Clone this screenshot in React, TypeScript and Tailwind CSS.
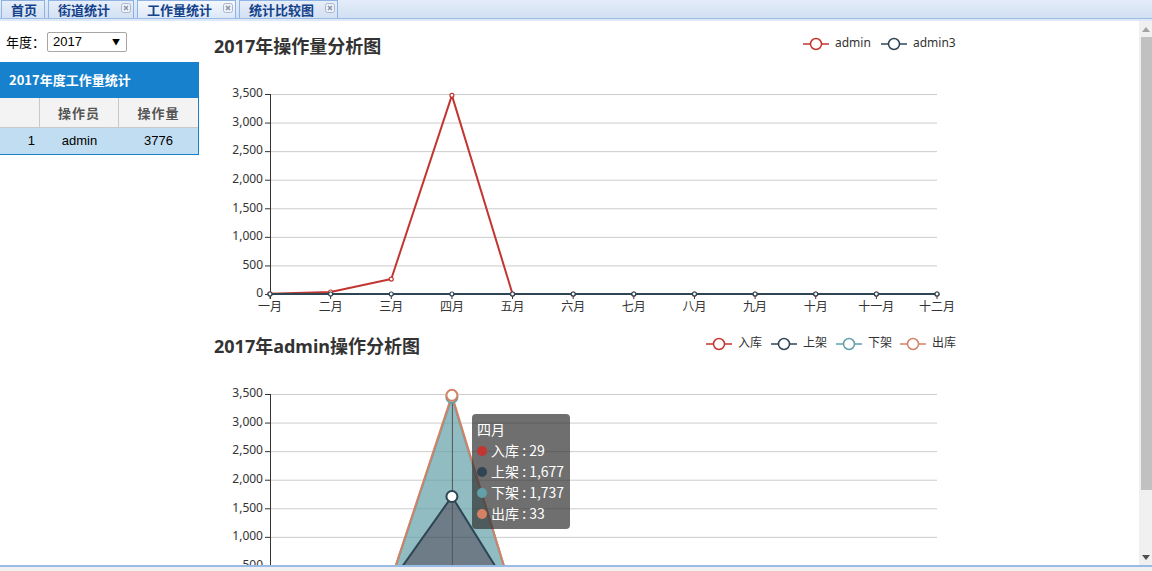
import React from 'react';

const months = ['一月', '二月', '三月', '四月', '五月', '六月', '七月', '八月', '九月', '十月', '十一月', '十二月'];
const ticks = [0, 500, 1000, 1500, 2000, 2500, 3000, 3500];

const X0 = 70;
const STEP = 667 / 11;
const Y0 = 268;
const xAt = (i: number) => X0 + i * STEP;
const yAt = (v: number) => Y0 - (v / 3500) * 200;
const fmt = (v: number) => v.toLocaleString('en-US');

const RED = '#c23531';
const DARK = '#2f4554';
const TEAL = '#61a0a8';
const ORANGE = '#d48265';

function CloseIcon() {
  return (
    <svg width="10" height="10" viewBox="0 0 10 10" className="self-start mt-[2px]">
      <rect x="0.5" y="0.5" width="9" height="9" rx="2" fill="#eef2f8" stroke="#aab7c9" />
      <path d="M3 3 L7 7 M7 3 L3 7" stroke="#8592a6" strokeWidth="1.4" />
    </svg>
  );
}

function Tab({ label, closable, active }: { label: string; closable?: boolean; active?: boolean }) {
  return (
    <div
      className={
        'h-[18px] flex items-center gap-[11px] border border-b-0 border-[#8db2e3] pl-[9px] ' +
        (closable ? 'pr-[2px] ' : 'pr-[7px] ') +
        (active ? 'bg-gradient-to-b from-[#f4f8fd] to-[#dce8f7]' : 'bg-gradient-to-b from-[#e6eef9] to-[#d3e1f3]')
      }
    >
      <span className="text-[13px] leading-none font-bold text-[#15428b]">{label}</span>
      {closable && <CloseIcon />}
    </div>
  );
}

function Axes() {
  return (
    <g>
      {ticks.map(t => (
        <g key={t}>
          {t > 0 && <line x1={X0} x2={737} y1={yAt(t) + 0.5} y2={yAt(t) + 0.5} stroke="#cccccc" />}
          <line x1={X0 - 5} x2={X0} y1={yAt(t) + 0.5} y2={yAt(t) + 0.5} stroke="#333" />
          <text x={X0 - 7} y={yAt(t)} textAnchor="end" dominantBaseline="middle" fontSize="12" fill="#333">
            {fmt(t)}
          </text>
        </g>
      ))}
      <line x1={X0 + 0.5} x2={X0 + 0.5} y1={yAt(3500)} y2={Y0 + 5} stroke="#333" />
      <line x1={X0} x2={737} y1={Y0 + 0.5} y2={Y0 + 0.5} stroke="#333" />
      {months.map((m, i) => (
        <g key={m}>
          <line x1={xAt(i)} x2={xAt(i)} y1={Y0} y2={Y0 + 5} stroke="#333" />
          <text x={xAt(i)} y={Y0 + 14} textAnchor="middle" dominantBaseline="middle" fontSize="12" fill="#333">
            {m}
          </text>
        </g>
      ))}
    </g>
  );
}

function LegendItem({ x, color, label }: { x: number; color: string; label: string }) {
  return (
    <g>
      <line x1={x} x2={x + 26} y1={18} y2={18} stroke={color} strokeWidth="1.5" />
      <circle cx={x + 13} cy={18} r="5.5" fill="#fff" stroke={color} strokeWidth="1.5" />
      <text x={x + 32} y={18} dominantBaseline="middle" fontSize="12" fill="#333">
        {label}
      </text>
    </g>
  );
}

const pts = (vals: number[]) => vals.map((v, i) => `${xAt(i)},${yAt(v)}`).join(' ');

function WorkloadChart() {
  const admin = [3, 35, 262, 3476, 0, 0, 0, 0, 0, 0, 0, 0];
  const admin3 = months.map(() => 0);
  return (
    <svg width="940" height="300" className="block shrink-0 font-['Noto_Sans','Noto_Sans_CJK_SC',sans-serif]">
      <text x="14" y="22" dominantBaseline="middle" fontSize="18" fontWeight="bold" fill="#333">
        2017年操作量分析图
      </text>
      <LegendItem x={603} color={RED} label="admin" />
      <LegendItem x={681} color={DARK} label="admin3" />
      <Axes />
      {[
        { vals: admin, color: RED },
        { vals: admin3, color: DARK },
      ].map(s => (
        <g key={s.color}>
          <polyline points={pts(s.vals)} fill="none" stroke={s.color} strokeWidth="2" strokeLinejoin="round" />
          {s.vals.map((v, i) => (
            <circle key={i} cx={xAt(i)} cy={yAt(v)} r="2" fill="#fff" stroke={s.color} strokeWidth="1.2" />
          ))}
        </g>
      ))}
    </svg>
  );
}

function DetailChart() {
  const series = [
    { name: '入库', color: RED, fill: 'rgba(194,53,49,0.7)', vals: [1, 10, 10, 29, 0, 0, 0, 0, 0, 0, 0, 0] },
    { name: '上架', color: DARK, fill: 'rgba(47,69,84,0.7)', vals: [1, 10, 200, 1677, 0, 0, 0, 0, 0, 0, 0, 0] },
    { name: '下架', color: TEAL, fill: 'rgba(97,160,168,0.7)', vals: [1, 10, 40, 1737, 0, 0, 0, 0, 0, 0, 0, 0] },
    { name: '出库', color: ORANGE, fill: 'rgba(212,130,101,0.7)', vals: [0, 5, 12, 33, 0, 0, 0, 0, 0, 0, 0, 0] },
  ];
  let prev = months.map(() => 0);
  const stacked = series.map(s => {
    const top = prev.map((p, i) => p + s.vals[i]);
    const bottom = prev;
    prev = top;
    return { ...s, top, bottom };
  });
  const hover = 3;

  return (
    <div className="relative shrink-0">
      <svg width="940" height="300" className="block font-['Noto_Sans','Noto_Sans_CJK_SC',sans-serif]">
        <text x="14" y="22" dominantBaseline="middle" fontSize="18" fontWeight="bold" fill="#333">
          2017年admin操作分析图
        </text>
        <LegendItem x={506} color={RED} label="入库" />
        <LegendItem x={571} color={DARK} label="上架" />
        <LegendItem x={636} color={TEAL} label="下架" />
        <LegendItem x={700} color={ORANGE} label="出库" />
        <Axes />
        {stacked.map(s => (
          <polygon
            key={s.name + 'a'}
            points={pts(s.top) + ' ' + s.bottom.map((v, i) => `${xAt(i)},${yAt(v)}`).reverse().join(' ')}
            fill={s.fill}
          />
        ))}
        {stacked.map(s => (
          <polyline key={s.name + 'l'} points={pts(s.top)} fill="none" stroke={s.color} strokeWidth="2" strokeLinejoin="round" />
        ))}
        <line x1={xAt(hover) + 0.5} x2={xAt(hover) + 0.5} y1={yAt(3500)} y2={Y0} stroke="#555" />
        {stacked.map(s => (
          <circle key={s.name + 'c'} cx={xAt(hover)} cy={yAt(s.top[hover])} r="5.5" fill="#fff" stroke={s.color} strokeWidth="2" />
        ))}
      </svg>
      <div className="absolute left-[272px] top-[88px] w-[98px] rounded-[4px] bg-[rgba(50,50,50,0.7)] px-[5px] py-[5px] text-[14px] leading-[21px] text-white">
        <div>四月</div>
        {series.map(s => (
          <div key={s.name} className="flex items-center whitespace-nowrap">
            <span className="mr-[4px] inline-block h-[10px] w-[10px] rounded-full" style={{ backgroundColor: s.color }} />
            {s.name} : {fmt(s.vals[hover])}
          </div>
        ))}
      </div>
    </div>
  );
}

function LeftPanel() {
  return (
    <div className="w-[200px] shrink-0 pt-[11px] text-[13px]">
      <div className="flex items-center h-[20px] pl-[6px]">
        <span className="text-black">年度：</span>
        <div className="ml-[2px] flex h-[20px] w-[80px] items-center justify-between rounded-[2px] border border-[#a6a6a6] bg-white pl-[5px] pr-[6px]">
          <span className="text-black font-['Liberation_Sans',sans-serif]">2017</span>
          <span className="text-[8px] text-black">▼</span>
        </div>
      </div>
      <div className="mt-[10px] w-[199px] border-r border-b border-[#1781cd]">
        <div className="flex h-[36px] items-center bg-[#1781cd] pl-[9px] font-bold text-white">2017年度工作量统计</div>
        <div className="flex h-[30px] bg-[#f3f3f3] border-b border-[#c8c8c8] font-bold text-[#555] tracking-[1px]">
          <div className="w-[40px] border-r border-[#c8c8c8]" />
          <div className="flex w-[79px] items-center justify-center border-r border-[#c8c8c8]">操作员</div>
          <div className="flex flex-1 items-center justify-center">操作量</div>
        </div>
        <div className="flex h-[26px] items-center bg-[#c1ddf1] text-black font-['Liberation_Sans','Noto_Sans_CJK_SC',sans-serif]">
          <div className="w-[40px] pr-[5px] text-right">1</div>
          <div className="w-[79px] text-center">admin</div>
          <div className="flex-1 text-center">3776</div>
        </div>
      </div>
    </div>
  );
}

function ScrollBar() {
  return (
    <div className="flex w-[13px] shrink-0 flex-col bg-[#f0f0f0]">
      <div className="flex h-[16px] items-center justify-center">
        <svg width="8" height="5"><path d="M0 5 L4 0 L8 5 Z" fill="#a3a3a3" /></svg>
      </div>
      <div className="ml-[2px] h-[453px] bg-[#c1c1c1]" />
      <div className="flex-1" />
      <div className="flex h-[16px] items-center justify-center">
        <svg width="8" height="5"><path d="M0 0 L8 0 L4 5 Z" fill="#505050" /></svg>
      </div>
    </div>
  );
}

export default function App() {
  return (
    <div className="flex h-[571px] w-[1152px] flex-col overflow-hidden bg-white font-['Noto_Sans_CJK_SC','Noto_Sans',sans-serif]">
      <div className="flex h-[18px] items-end gap-[3px] bg-gradient-to-b from-[#e4edf9] to-[#d2e0f2] pl-[1px]">
        <Tab label="首页" />
        <Tab label="街道统计" closable />
        <Tab label="工作量统计" closable active />
        <Tab label="统计比较图" closable />
      </div>
      <div className="h-[1px] bg-[#99bbe8]" />
      <div className="h-[2px] bg-[#dfe8f6]" />
      <div className="flex h-[544px]">
        <div className="flex flex-1 overflow-hidden">
          <LeftPanel />
          <div className="flex flex-col pt-[5px]">
            <WorkloadChart />
            <DetailChart />
          </div>
        </div>
        <ScrollBar />
      </div>
      <div className="h-[2px] bg-[#99bbe8]" />
      <div className="flex-1 bg-[#f0f0f0]" />
    </div>
  );
}
